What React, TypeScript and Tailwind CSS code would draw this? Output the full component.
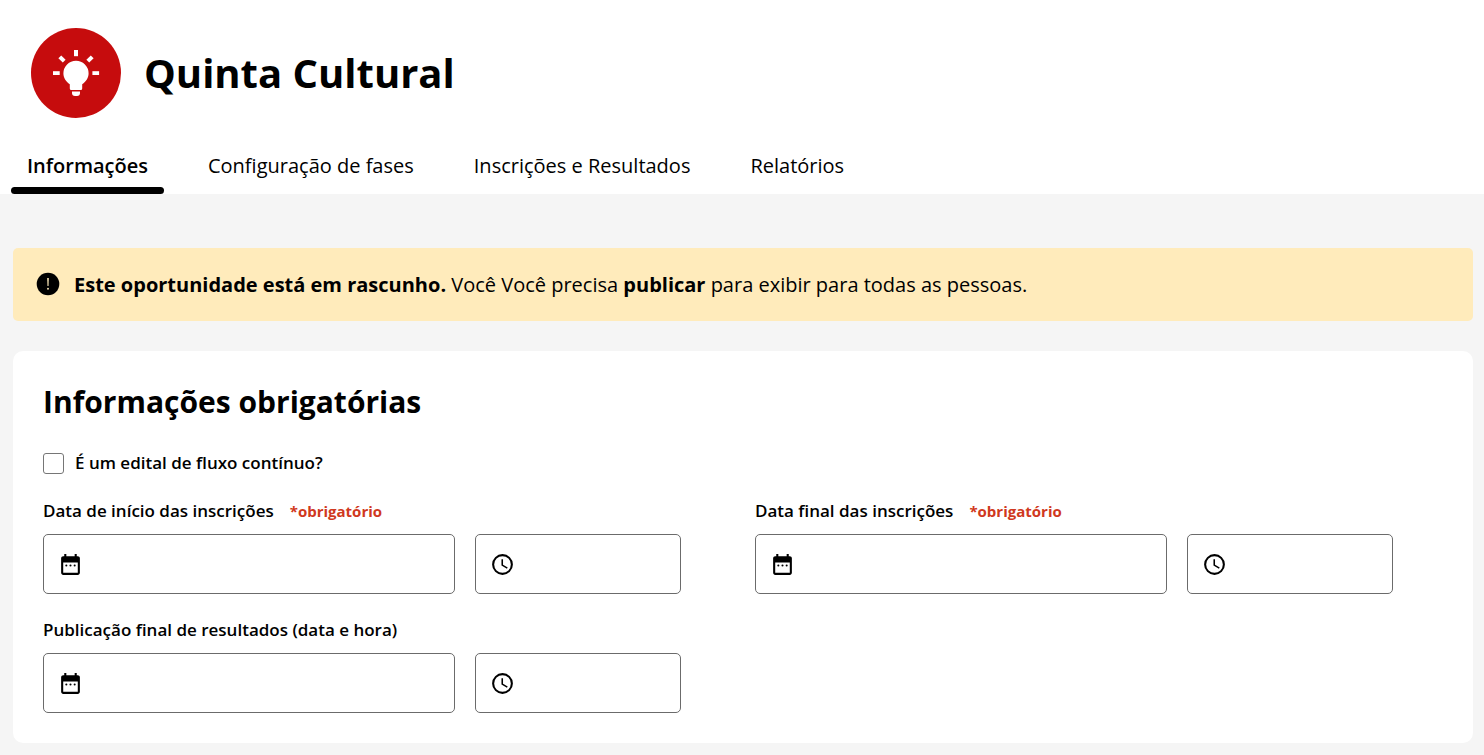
import { useId, useState } from "react";

function LightbulbBadge() {
  return (
    <svg viewBox="0 0 90 90" className="size-[90px] shrink-0" aria-hidden="true">
      <circle cx="45" cy="45" r="45" fill="#c60c0d" />
      <g fill="#fff">
        <path d="M45 32.7a12.6 12.6 0 0 0-12.6 12.6c0 4.6 2.5 8.4 6.4 11V60.500q0 1.500 1.500 1.500h9.400q1.500 0 1.500-1.500V56.300c3.900-2.600 6.400-6.400 6.400-11A12.600 12.600 0 0 0 45 32.700z" />
        <path d="M41 63.500h8v1.500q0 3-3 3h-2q-3 0-3-3z" />
        <rect x="43" y="22" width="4" height="6.200" />
        <rect x="22" y="43.200" width="6.700" height="3.800" />
        <rect x="61.400" y="43.200" width="6.700" height="3.800" />
        <rect x="-2" y="-3.100" width="4" height="6.200" transform="translate(31 31) rotate(-45)" />
        <rect x="-2" y="-3.100" width="4" height="6.200" transform="translate(59 31) rotate(45)" />
      </g>
    </svg>
  );
}

function AlertIcon() {
  return (
    <svg viewBox="0 0 24 24" className="mt-[3px] size-6 shrink-0" aria-hidden="true">
      <circle cx="12" cy="12" r="11.3" fill="#000" />
      <path d="M11.2 6h1.600l-.3 8h-1z" fill="#ffebbb" />
      <circle cx="12" cy="16.7" r="0.95" fill="#ffebbb" />
    </svg>
  );
}

function CalendarIcon() {
  return (
    <svg viewBox="0 0 24 24" className="size-[25px] shrink-0" aria-hidden="true">
      <path
        fillRule="evenodd"
        d="M5 22q-.825 0-1.412-.587T3 20V6q0-.825.588-1.412T5 4h1V2h2v2h8V2h2v2h1q.825 0 1.413.588T21 6v14q0 .825-.587 1.413T19 22zM5 20h14V10H5z"
      />
      <circle cx="8" cy="13" r="1" />
      <circle cx="12" cy="13" r="1" />
      <circle cx="16" cy="13" r="1" />
    </svg>
  );
}

function ClockIcon() {
  return (
    <svg viewBox="0 0 24 24" className="size-[25px] shrink-0" aria-hidden="true">
      <circle cx="12" cy="12" r="9" fill="none" stroke="#000" strokeWidth="2" />
      <path d="M12.5 7H11v6l5.25 3.15.75-1.23-4.5-2.67z" />
    </svg>
  );
}

const TABS = ["Informações", "Configuração de fases", "Inscrições e Resultados", "Relatórios"];

function DateTimeField({ label, required = false }: { label: string; required?: boolean }) {
  const id = useId();
  const box = "flex h-[60px] min-w-0 items-center gap-3 rounded-[5px] border border-[#6b6b6b] px-3.5";
  const input = "w-full min-w-0 bg-transparent text-lg outline-none";
  return (
    <div className="pr-[50px]">
      <div className="flex items-baseline gap-4">
        <label htmlFor={id} className="text-[17px] leading-6 font-semibold">
          {label}
        </label>
        {required && <span className="text-[15px] leading-6 font-bold text-[#d03820]">*obrigatório</span>}
      </div>
      <div className="mt-[11px] grid grid-cols-[2fr_1fr] gap-5">
        <div className={box}>
          <CalendarIcon />
          <input id={id} type="text" className={input} />
        </div>
        <div className={box}>
          <ClockIcon />
          <input type="text" aria-label={`${label}, hora`} className={input} />
        </div>
      </div>
    </div>
  );
}

export default function App() {
  const [active, setActive] = useState(0);
  return (
    <div className="min-h-screen bg-[#f5f5f5] font-['Open_Sans',sans-serif] text-black">
      <header className="bg-white pt-7">
        <div className="flex items-center gap-[23px] px-[31px]">
          <LightbulbBadge />
          <h1 className="text-[40px] leading-[54px] font-bold">Quinta Cultural</h1>
        </div>
        <nav className="mt-[33px] flex gap-7 px-[11px]">
          {TABS.map((tab, i) => (
            <button
              key={tab}
              type="button"
              onClick={() => setActive(i)}
              className={
                i === active
                  ? "flex flex-col text-xl leading-[30px] font-semibold"
                  : "flex flex-col text-xl leading-[30px]"
              }
            >
              <span className="px-4">{tab}</span>
              <span
                className={
                  i === active ? "mt-1.5 h-[7px] w-full rounded-full bg-black" : "mt-1.5 h-[7px] w-full"
                }
              />
            </button>
          ))}
        </nav>
      </header>

      <main className="pt-[54px] pr-[11px] pb-3 pl-[13px]">
        <div role="alert" className="flex items-start gap-3.5 rounded-[5px] bg-[#ffebbb] px-[23px] py-[21px]">
          <AlertIcon />
          <p className="text-xl leading-[31px]">
            <strong className="font-bold">Este oportunidade está em rascunho.</strong> Você Você precisa{" "}
            <strong className="font-bold">publicar</strong> para exibir para todas as pessoas.
          </p>
        </div>

        <section className="mt-[30px] rounded-[10px] bg-white p-[30px]">
          <h2 className="text-[30px] leading-[42px] font-bold">Informações obrigatórias</h2>
          <label className="mt-7 flex items-center gap-[11px] text-[17px] leading-6 font-semibold">
            <input
              type="checkbox"
              className="size-[21px] appearance-none rounded-[3px] border border-[#767676] bg-white checked:bg-black"
            />
            É um edital de fluxo contínuo?
          </label>
          <div className="mt-6 grid grid-cols-2 gap-6">
            <DateTimeField label="Data de início das inscrições" required />
            <DateTimeField label="Data final das inscrições" required />
            <DateTimeField label="Publicação final de resultados (data e hora)" />
          </div>
        </section>
      </main>
    </div>
  );
}
